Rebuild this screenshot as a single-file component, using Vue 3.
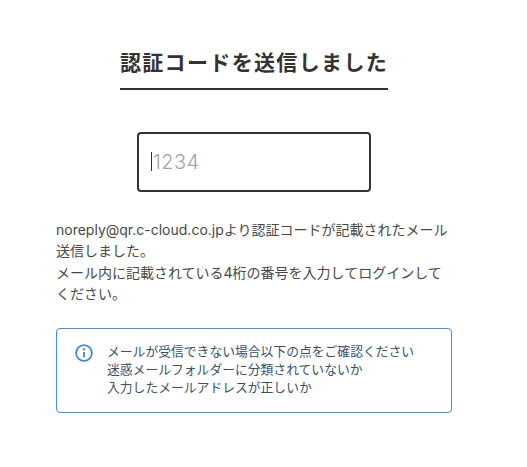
<script setup>
const bodyLines = [
  'noreply@qr.c-cloud.co.jpより認証コードが記載されたメール送信しました。',
  'メール内に記載されている4桁の番号を入力してログインしてください。',
]
const infoLines = [
  'メールが受信できない場合以下の点をご確認ください',
  '迷惑メールフォルダーに分類されていないか',
  '入力したメールアドレスが正しいか',
]
</script>

<template>
  <main class="page">
    <h1 class="title">認証コードを送信しました</h1>
    <div class="field">
      <input class="code" type="text" placeholder="1234" aria-label="認証コード" />
      <span class="caret"></span>
    </div>
    <div class="message">
      <p v-for="line in bodyLines" :key="line">{{ line }}</p>
    </div>
    <section class="info">
      <svg class="icon" viewBox="0 0 18 18" width="18" height="18" fill="none" aria-hidden="true">
        <circle cx="9" cy="9" r="7.9" stroke="#3d85d8" stroke-width="1.7" />
        <circle cx="9" cy="5.4" r="1.05" fill="#3d85d8" />
        <path d="M9 8v5.2" stroke="#3d85d8" stroke-width="1.8" />
      </svg>
      <div class="info-text">
        <p v-for="line in infoLines" :key="line">{{ line }}</p>
      </div>
    </section>
  </main>
</template>

<style>
html, body { margin: 0; background: #fff; }
</style>

<style scoped>
.page {
  box-sizing: border-box;
  width: 527px;
  height: 467px;
  padding: 46px 75px 0 56px;
  display: flex;
  flex-direction: column;
  align-items: center;
  font-family: Inter, "Noto Sans CJK JP", sans-serif;
  color: #333;
}
.title {
  margin: 0;
  padding-bottom: 8px;
  border-bottom: 2px solid #333;
  font-size: 21px;
  line-height: 34px;
  font-weight: 700;
  letter-spacing: 1.35px;
  white-space: nowrap;
}
.field {
  position: relative;
  margin-top: 42px;
  width: 234px;
  height: 60px;
}
.code {
  box-sizing: border-box;
  display: block;
  width: 100%;
  height: 100%;
  padding: 0 14px;
  border: 2px solid #333;
  border-radius: 4px;
  outline: none;
  background: #fff;
  font-family: Inter, sans-serif;
  font-size: 20px;
  font-weight: 300;
  letter-spacing: 0.4px;
  caret-color: transparent;
}
.code::placeholder {
  color: #a3a3a3;
  opacity: 1;
}
.caret {
  position: absolute;
  left: 14px;
  top: 20px;
  width: 1px;
  height: 19px;
  background: #333;
}
.message {
  align-self: stretch;
  margin-top: 27px;
  font-size: 14px;
  line-height: 21.3px;
  color: #484848;
}
.message p, .info-text p {
  margin: 0;
}
.info {
  box-sizing: border-box;
  align-self: stretch;
  margin-top: 24px;
  height: 85px;
  padding: 14px 18px;
  border: 1px solid #3d90ef;
  border-radius: 4px;
  display: flex;
  gap: 14px;
}
.icon {
  flex: none;
  margin-top: 1px;
}
.info-text {
  font-size: 12.8px;
  line-height: 18px;
  color: #3c5068;
  white-space: nowrap;
}
</style>
